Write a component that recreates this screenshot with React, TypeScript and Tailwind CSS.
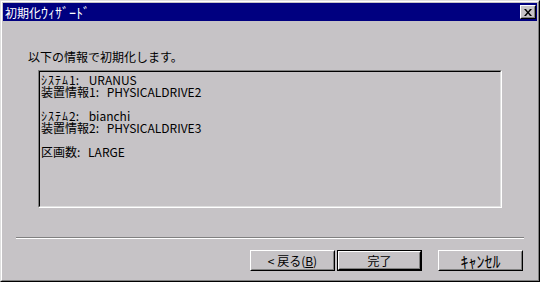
import type { ReactNode } from "react"

const Button = ({ children, isDefault = false }: { children: ReactNode; isDefault?: boolean }) => {
  return (
    <div className={`h-[21px] w-[85px] ${isDefault ? "border border-black" : ""}`}>
      <div className="flex h-full w-full border border-t-white border-l-white border-r-black border-b-black">
        <div className="flex h-full w-full items-center justify-center border border-t-[#c6c3c6] border-l-[#c6c3c6] border-r-[#808080] border-b-[#808080] text-[12px] leading-[12px] text-black">
          {children}
        </div>
      </div>
    </div>
  )
}

const Line = ({ children }: { children?: ReactNode }) => (
  <div className="h-[12px] whitespace-pre text-[12px] leading-[12px] text-black">{children}</div>
)

const App = () => {
  return (
    <div className="h-[282px] w-[540px] bg-[#c6c3c6] border border-t-[#dfdfdf] border-l-[#dfdfdf] border-r-black border-b-black font-['Noto_Sans_CJK_JP',sans-serif]">
      <div className="flex h-full w-full flex-col border border-t-white border-l-white border-r-[#808080] border-b-[#808080] p-px">
        {/* title bar */}
        <div className="flex h-[18px] items-center justify-between bg-[#000080] pl-[2px] pr-[1px]">
          <span className="text-[12px] leading-[12px] text-white">
            初期化<span className="text-[14px] leading-[12px]">ｳｨｻﾞｰﾄﾞ</span>
          </span>
          <div className="h-[14px] w-[16px] border border-t-white border-l-white border-r-black border-b-black">
            <div className="flex h-full w-full items-center justify-center border border-t-[#c6c3c6] border-l-[#c6c3c6] border-r-[#808080] border-b-[#808080] bg-[#c6c3c6]">
              <svg width="8" height="7" viewBox="0 0 8 7">
                <path d="M0 0h2l2 2.5L6 0h2L5 3.5 8 7H6L4 4.5 2 7H0l3-3.5z" fill="black" />
              </svg>
            </div>
          </div>
        </div>

        {/* body */}
        <div className="flex flex-1 flex-col">
          <p className="ml-[25px] mt-[30px] text-[12px] leading-[12px] text-black">以下の情報で初期化します。</p>

          <div className="ml-[35px] mt-[7px] h-[138px] w-[464px] border border-t-[#808080] border-l-[#808080] border-r-white border-b-white">
            <div className="h-full w-full border border-t-black border-l-black border-r-[#dfdfdf] border-b-[#dfdfdf] pl-px pt-[2px]">
              <Line>
                <span className="tracking-[1px]">ｼｽﾃﾑ</span>1: <span className="ml-[7px]">URANUS</span>
              </Line>
              <Line>
                装置情報1: <span className="ml-[5px]">PHYSICALDRIVE2</span>
              </Line>
              <Line />
              <Line>
                <span className="tracking-[1px]">ｼｽﾃﾑ</span>2: <span className="ml-[7px]">bianchi</span>
              </Line>
              <Line>
                装置情報2: <span className="ml-[5px]">PHYSICALDRIVE3</span>
              </Line>
              <Line />
              <Line>
                区画数: <span className="ml-[5px]">LARGE</span>
              </Line>
            </div>
          </div>

          <div className="ml-[13px] mt-[29px] w-[508px] border-t border-b border-t-[#808080] border-b-white" />

          <div className="mr-[14px] mt-[11px] flex justify-end">
            <div className="flex gap-[2px]">
              <Button>
                <span>
                  &lt; 戻る(<span className="underline">B</span>)
                </span>
              </Button>
              <Button isDefault>完了</Button>
            </div>
            <div className="ml-[16px]">
              <Button>
                <span className="text-[16px] leading-[12px]">ｷｬﾝｾﾙ</span>
              </Button>
            </div>
          </div>
        </div>
      </div>
    </div>
  )
}

export default App
